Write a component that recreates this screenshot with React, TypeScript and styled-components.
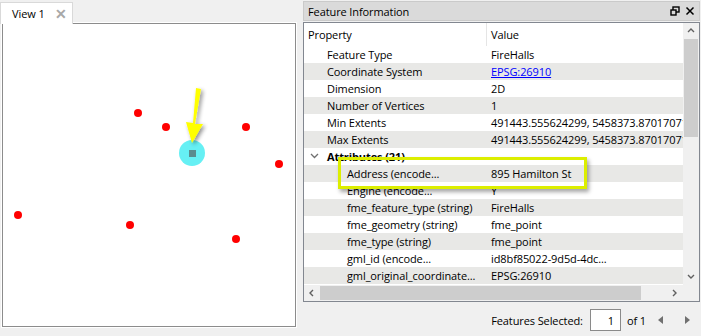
import React from "react";
import styled, { createGlobalStyle } from "styled-components";

const GlobalStyle = createGlobalStyle`
  html, body {
    margin: 0;
    padding: 0;
    background: #f0f0f0;
  }
  body {
    font-family: "Open Sans", "Noto Sans", sans-serif;
    font-size: 11px;
    letter-spacing: -0.1px;
    color: #000;
  }
`;

const Window = styled.div`
  width: 701px;
  height: 336px;
  display: flex;
  background: #f0f0f0;
  overflow: hidden;
`;

const LeftPanel = styled.div`
  width: 297px;
  display: flex;
  flex-direction: column;
`;

const TabBar = styled.div`
  height: 23px;
  display: flex;
  align-items: flex-end;
`;

const Tab = styled.div`
  width: 73px;
  height: 22px;
  background: #fff;
  border: 1px solid #d9d9d9;
  border-bottom: none;
  box-sizing: border-box;
  display: flex;
  align-items: center;
  padding-left: 11px;
  gap: 10px;
  white-space: nowrap;
  color: #000;
  margin-bottom: -1px;
  position: relative;
  z-index: 1;
`;

const TabClose = styled.span`
  color: #a8a8a8;
  font-size: 14px;
  font-weight: 700;
  line-height: 1;
`;

const MapFrame = styled.div`
  margin-left: 2px;
  width: 294px;
  height: 304px;
  box-sizing: border-box;
  border: 1px solid #8c8c8c;
  outline: 1px solid #fff;
  background: #fff;
`;

const MapCanvas = styled.svg`
  display: block;
  width: 292px;
  height: 302px;
`;

const RightPanel = styled.div`
  margin-left: 6px;
  width: 397px;
  display: flex;
  flex-direction: column;
`;

const TitleBar = styled.div`
  height: 20px;
  margin-top: 1px;
  box-sizing: border-box;
  background: #dadada;
  border: 1px solid #cacaca;
  display: flex;
  align-items: center;
  padding-left: 4px;
  padding-right: 4px;
`;

const TitleText = styled.span`
  flex: 1;
`;

const TitleIcons = styled.div`
  display: flex;
  align-items: center;
  gap: 5px;
`;

const TableFrame = styled.div`
  margin-top: 1px;
  height: 280px;
  box-sizing: border-box;
  border: 1px solid #828790;
  background: #fff;
  display: grid;
  grid-template-columns: 1fr 16px;
  grid-template-rows: 1fr 16px;
`;

const TableView = styled.div`
  position: relative;
  overflow: hidden;
`;

const Row = styled.div<{ $alt?: boolean; $header?: boolean }>`
  height: ${(p) => (p.$header ? "23px" : "17px")};
  display: grid;
  grid-template-columns: 183px 1fr;
  align-items: center;
  background: ${(p) => (p.$alt ? "#e8e8e6" : "#fff")};
  white-space: nowrap;
`;

const Cell = styled.div<{ $indent?: number; $bold?: boolean; $divider?: boolean }>`
  padding-left: ${(p) => p.$indent ?? 4}px;
  font-weight: ${(p) => (p.$bold ? 700 : 400)};
  overflow: hidden;
  position: relative;
  height: 100%;
  display: flex;
  align-items: center;
  border-right: ${(p) => (p.$divider ? "1px solid #e5e5e5" : "none")};
`;

const Link = styled.span`
  color: #0000ff;
  text-decoration: underline;
`;

const Expander = styled.svg`
  position: absolute;
  left: 6px;
  top: 5px;
`;

const Highlight = styled.div`
  position: absolute;
  left: 34px;
  top: 134px;
  width: 249px;
  height: 32px;
  box-sizing: border-box;
  border: 3px solid #dcee00;
  box-shadow: 2px 3px 4px rgba(0, 0, 0, 0.35);
  pointer-events: none;
`;

const VScroll = styled.div`
  background: #f0f0f0;
  display: flex;
  flex-direction: column;
  align-items: center;
`;

const HScroll = styled.div`
  background: #f0f0f0;
  display: flex;
  align-items: center;
`;

const Corner = styled.div`
  background: #f0f0f0;
`;

const ArrowBox = styled.div`
  width: 16px;
  height: 16px;
  display: flex;
  align-items: center;
  justify-content: center;
  flex-shrink: 0;
`;

const VThumb = styled.div`
  width: 14px;
  height: 98px;
  background: #cdcdcd;
`;

const HThumb = styled.div`
  height: 14px;
  width: 321px;
  background: #cdcdcd;
`;

const Spacer = styled.div`
  flex: 1;
`;

const Footer = styled.div`
  flex: 1;
  display: flex;
  align-items: center;
  justify-content: flex-end;
  padding-right: 10px;
  padding-top: 2px;
`;

const FooterLabel = styled.span`
  margin-right: 7px;
`;

const PageInput = styled.div`
  width: 31px;
  height: 22px;
  box-sizing: border-box;
  border: 1px solid #8a8a8a;
  background: #fff;
  display: flex;
  align-items: center;
  justify-content: flex-end;
  padding-right: 6px;
  margin-right: 6px;
`;

const NavArrow = styled.svg<{ $gap: number }>`
  margin-left: ${(p) => p.$gap}px;
`;

type Prop = {
  name: string;
  value: React.ReactNode;
};

const topProps: Prop[] = [
  { name: "Feature Type", value: "FireHalls" },
  { name: "Coordinate System", value: <Link>EPSG:26910</Link> },
  { name: "Dimension", value: "2D" },
  { name: "Number of Vertices", value: "1" },
  { name: "Min Extents", value: "491443.555624299, 5458373.87017071" },
  { name: "Max Extents", value: "491443.555624299, 5458373.87017071" },
];

const attrProps: Prop[] = [
  { name: "Address (encode...", value: "895 Hamilton St" },
  { name: "Engine (encode...", value: "Y" },
  { name: "fme_feature_type (string)", value: "FireHalls" },
  { name: "fme_geometry (string)", value: "fme_point" },
  { name: "fme_type (string)", value: "fme_point" },
  { name: "gml_id (encode...", value: "id8bf85022-9d5d-4dc..." },
  { name: "gml_original_coordinate...", value: "EPSG:26910" },
];

const dots = [
  [138, 113],
  [166, 127],
  [246, 127],
  [279, 164],
  [18, 215],
  [130, 225],
  [236, 239],
];

const Chevron = ({ dir }: { dir: "up" | "down" | "left" | "right" }) => {
  const d = {
    up: "M1 5 L4 2 L7 5",
    down: "M1 2 L4 5 L7 2",
    left: "M5 1 L2 4 L5 7",
    right: "M2 1 L5 4 L2 7",
  }[dir];
  return (
    <svg width="8" height="8" viewBox="0 0 8 8">
      <path d={d} fill="none" stroke="#606060" strokeWidth="1.4" />
    </svg>
  );
};

const App = () => {
  return (
    <Window>
      <GlobalStyle />
      <LeftPanel>
        <TabBar>
          <Tab>
            View 1<TabClose>✕</TabClose>
          </Tab>
        </TabBar>
        <MapFrame>
          <MapCanvas viewBox="3 24 292 302">
            <defs>
              <filter id="shadow" x="-50%" y="-20%" width="200%" height="140%">
                <feGaussianBlur in="SourceAlpha" stdDeviation="2" />
                <feOffset dx="2" dy="2" />
                <feComponentTransfer>
                  <feFuncA type="linear" slope="0.45" />
                </feComponentTransfer>
                <feMerge>
                  <feMergeNode />
                  <feMergeNode in="SourceGraphic" />
                </feMerge>
              </filter>
            </defs>
            {dots.map(([x, y]) => (
              <circle key={`${x}-${y}`} cx={x} cy={y} r={4} fill="#ff0000" />
            ))}
            <circle cx={192} cy={153} r={13} fill="#66f0f4" />
            <rect x={189} y={150} width={7} height={7} fill="#5a8c8e" />
            <g filter="url(#shadow)">
              <path
                d="M196 88 L201 89 L195 124 L203 124 L192 143 L186 122 L193 123 Z"
                fill="#ffff00"
              />
            </g>
          </MapCanvas>
        </MapFrame>
      </LeftPanel>

      <RightPanel>
        <TitleBar>
          <TitleText>Feature Information</TitleText>
          <TitleIcons>
            <svg width="10" height="10" viewBox="0 0 10 10">
              <rect x="3" y="1" width="6" height="5" fill="none" stroke="#000" strokeWidth="1.4" />
              <rect x="1" y="4" width="5" height="5" fill="#dadada" stroke="#000" strokeWidth="1.4" />
            </svg>
            <svg width="10" height="10" viewBox="0 0 10 10">
              <path d="M1.5 1.5 L8.5 8.5 M8.5 1.5 L1.5 8.5" stroke="#000" strokeWidth="1.5" />
            </svg>
          </TitleIcons>
        </TitleBar>
        <TableFrame>
          <TableView>
            <Row $header>
              <Cell $divider>Property</Cell>
              <Cell>Value</Cell>
            </Row>
            {topProps.map((p, i) => (
              <Row key={p.name} $alt={i % 2 === 1}>
                <Cell $indent={23}>{p.name}</Cell>
                <Cell>{p.value}</Cell>
              </Row>
            ))}
            <Row>
              <Cell $indent={23} $bold>
                <Expander width="9" height="6" viewBox="0 0 9 6">
                  <path d="M1 1 L4.5 4.5 L8 1" fill="none" stroke="#707070" strokeWidth="1.3" />
                </Expander>
                Attributes (21)
              </Cell>
              <Cell />
            </Row>
            {attrProps.map((p, i) => (
              <Row key={p.name} $alt={i % 2 === 0}>
                <Cell $indent={43}>{p.name}</Cell>
                <Cell>{p.value}</Cell>
              </Row>
            ))}
            <Highlight />
          </TableView>
          <VScroll>
            <ArrowBox>
              <Chevron dir="up" />
            </ArrowBox>
            <VThumb />
            <Spacer />
            <ArrowBox>
              <Chevron dir="down" />
            </ArrowBox>
          </VScroll>
          <HScroll>
            <ArrowBox>
              <Chevron dir="left" />
            </ArrowBox>
            <HThumb />
            <Spacer />
            <ArrowBox>
              <Chevron dir="right" />
            </ArrowBox>
          </HScroll>
          <Corner />
        </TableFrame>
        <Footer>
          <FooterLabel>Features Selected:</FooterLabel>
          <PageInput>1</PageInput>
          <span>of 1</span>
          <NavArrow $gap={12} width="5" height="8" viewBox="0 0 5 8">
            <path d="M5 0 L0 4 L5 8 Z" fill="#707070" />
          </NavArrow>
          <NavArrow $gap={22} width="5" height="8" viewBox="0 0 5 8">
            <path d="M0 0 L5 4 L0 8 Z" fill="#707070" />
          </NavArrow>
        </Footer>
      </RightPanel>
    </Window>
  );
};

export default App;
